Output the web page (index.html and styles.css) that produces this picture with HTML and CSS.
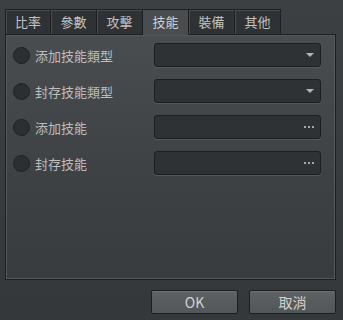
FILE: index.html
```html
<!DOCTYPE html>
<html lang="zh-Hant">
<head>
    <meta charset="UTF-8">
    <meta name="viewport" content="width=device-width, initial-scale=1.0">
    <title>技能</title>
    <link rel="stylesheet" href="styles.css">
</head>
<body>
    <div class="dialog">
        <div class="tabs">
            <div class="tab">比率</div>
            <div class="tab">參數</div>
            <div class="tab">攻擊</div>
            <div class="tab active">技能</div>
            <div class="tab">裝備</div>
            <div class="tab">其他</div>
        </div>
        <div class="panel">
            <div class="row">
                <label class="option"><span class="radio"></span>添加技能類型</label>
                <div class="field"><span class="arrow"></span></div>
            </div>
            <div class="row">
                <label class="option"><span class="radio"></span>封存技能類型</label>
                <div class="field"><span class="arrow"></span></div>
            </div>
            <div class="row">
                <label class="option"><span class="radio"></span>添加技能</label>
                <div class="field"><span class="dots"><i></i><i></i><i></i></span></div>
            </div>
            <div class="row">
                <label class="option"><span class="radio"></span>封存技能</label>
                <div class="field"><span class="dots"><i></i><i></i><i></i></span></div>
            </div>
        </div>
        <div class="buttons">
            <button class="btn">OK</button>
            <button class="btn">取消</button>
        </div>
    </div>
</body>
</html>
```

FILE: styles.css
```css
body {
    margin: 0;
    background: #393c3e;
    font-family: "Noto Sans CJK TC", "Liberation Sans", sans-serif;
    color: #c4c4c4;
}

.dialog {
    width: 343px;
    height: 320px;
    padding: 9px 7px 0 5px;
    box-sizing: border-box;
    background: linear-gradient(#3d4042, #35383a);
}

.tabs {
    display: flex;
    height: 25px;
}

.tab {
    width: 46px;
    box-sizing: border-box;
    border: 1px solid #1d1f21;
    border-bottom: none;
    background: #2f3234;
    box-shadow: inset 1px 1px 0 #494c4e;
    font-size: 13px;
    line-height: 24px;
    text-align: center;
    color: #c2c2c2;
}

.tab + .tab {
    border-left: none;
}

.tab.active {
    height: 26px;
    margin-bottom: -1px;
    background: #4a4d4f;
    box-shadow: none;
    color: #cfcfcf;
    position: relative;
}

.panel {
    height: 246px;
    box-sizing: border-box;
    border: 1px solid #1d1f21;
    box-shadow: inset 0 0 0 1px #55585a;
    background: linear-gradient(#4a4d4f, #3e4143 60%, #393c3e);
    padding: 8px 14px 0 7px;
    display: flex;
    flex-direction: column;
    gap: 12px;
}

.row {
    display: grid;
    grid-template-columns: 1fr 167px;
    align-items: center;
    height: 24px;
}

.option {
    display: flex;
    align-items: center;
    gap: 5px;
    font-size: 13px;
    color: #bdbdbd;
}

.radio {
    width: 17px;
    height: 17px;
    box-sizing: border-box;
    border-radius: 50%;
    border: 1px solid #1f2123;
    background: #2c2f31;
}

.field {
    height: 24px;
    box-sizing: border-box;
    border: 1px solid #1c1e20;
    border-radius: 3px;
    background: #2f3234;
    box-shadow: 0 1px 0 #55585a;
    display: flex;
    align-items: center;
    justify-content: flex-end;
    padding-right: 6px;
}

.arrow {
    width: 0;
    height: 0;
    border-left: 4px solid transparent;
    border-right: 4px solid transparent;
    border-top: 4px solid #b4b4b4;
}

.dots {
    display: flex;
    gap: 2px;
}

.dots i {
    width: 2px;
    height: 2px;
    background: #a8a8a8;
}

.buttons {
    display: flex;
    justify-content: flex-end;
    gap: 11px;
    margin-top: 10px;
}

.btn {
    width: 87px;
    height: 24px;
    border: 1px solid #1c1e20;
    border-radius: 2px;
    background: linear-gradient(#5f6264, #535658);
    box-shadow: inset 0 1px 0 #6d7072;
    font-family: "Noto Sans CJK TC", "Liberation Sans", sans-serif;
    font-size: 14px;
    color: #d2d2d2;
    padding: 0;
}
```
